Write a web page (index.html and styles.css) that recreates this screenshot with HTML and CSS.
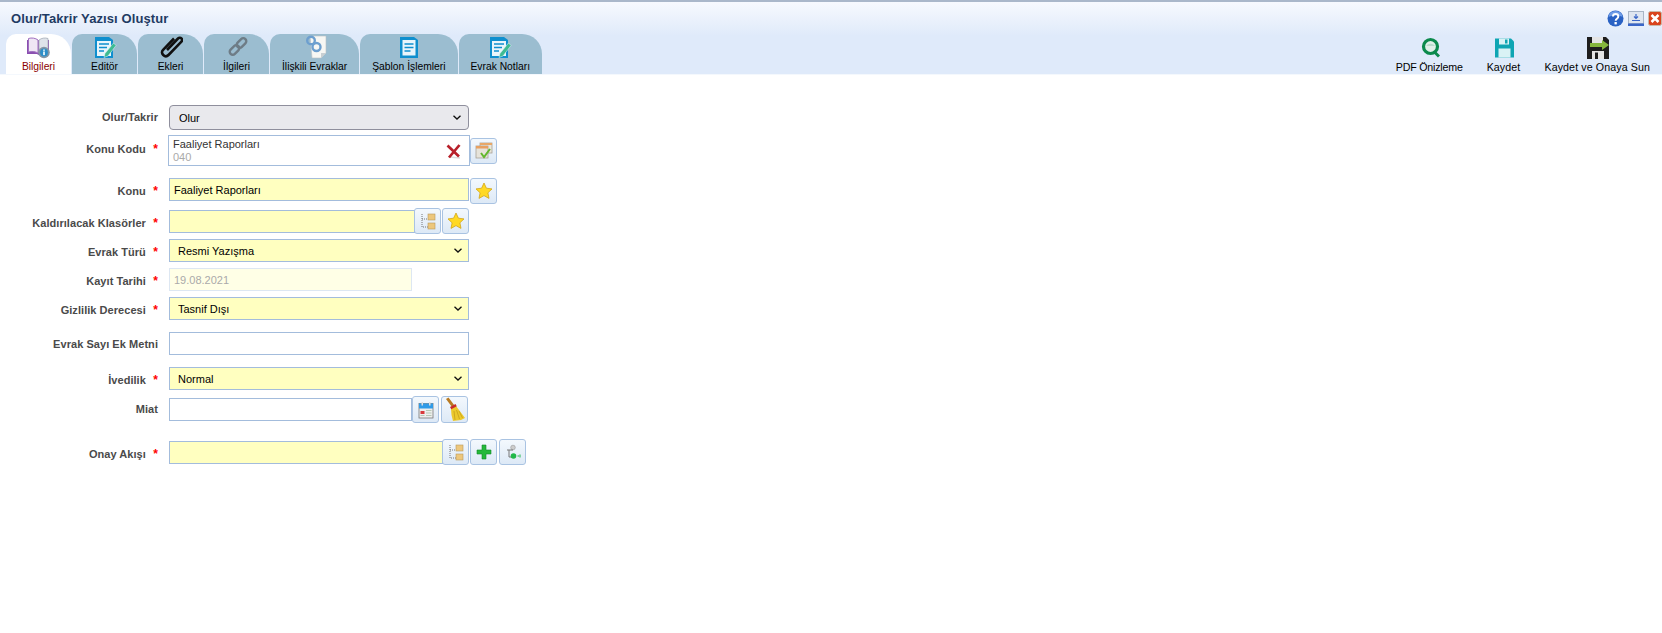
FILE: index.html
```html
<!DOCTYPE html>
<html lang="tr">
<head>
    <meta charset="UTF-8">
    <title>Olur/Takrir Yazısı Oluştur</title>
    <link rel="stylesheet" href="styles.css">
</head>
<body>
    <div class="header">
        <div class="title-bar">
            <span class="title">Olur/Takrir Yazısı Oluştur</span>
            <div class="window-icons">
                <svg width="17" height="17" viewBox="0 0 17 17"><circle cx="8.5" cy="8.5" r="8" fill="#2a62c4"/><path d="M1.5 7a7 6 0 0 1 14 0c-3-2-10-2-14 0z" fill="#6f9de8"/><path d="M6 6.5c0-3.2 5.3-3.2 5.3 0 0 2.3-2.6 2.2-2.6 4.2" fill="none" stroke="#fff" stroke-width="2"/><rect x="7.5" y="12" width="2.3" height="2.4" fill="#fff"/></svg>
                <svg width="16" height="15" viewBox="0 0 16 15"><rect x="0.5" y="0.5" width="15" height="12" fill="#dfe6f0" stroke="#a8b5c6"/><rect y="12.5" width="16" height="2.5" fill="#3a66c8"/><path d="M8 3v4M6 5.5L8 7.5 10 5.5" fill="none" stroke="#3a66c8" stroke-width="1.2"/><rect x="4" y="9" width="8" height="1" fill="#3a66c8"/></svg>
                <svg width="14" height="15" viewBox="0 0 14 15"><rect x="0.5" y="0.5" width="13" height="14" rx="2" fill="#d9431c" stroke="#c9b8a8"/><path d="M3.5 4l7 7M10.5 4l-7 7" stroke="#fff" stroke-width="2.6"/></svg>
            </div>
        </div>
        <div class="tab-bar">
            <div class="tabs">
                <div class="tab active">
                    <svg width="25" height="24" viewBox="0 0 25 24"><path d="M1 5v14h10l1.5 1 1.5-1h9V5z" fill="#8a4fb0"/><path d="M2.500 3.500c3-1 7-.5 9.500 1.500v13c-2.500-1.500-6-2-9.500-1z" fill="#efe6f4" stroke="#a06fc0"/><path d="M13 5c2.500-2 6-2.500 9-1.500V15l-9 3z" fill="#dfe3ea" stroke="#a7adb8" stroke-width=".8"/><circle cx="18" cy="17.500" r="5.800" fill="#8696a5"/><circle cx="18" cy="17.500" r="3.900" fill="#2d8ec8"/><rect x="17.200" y="16.500" width="1.600" height="3.600" fill="#fff"/><rect x="17.200" y="14.500" width="1.600" height="1.300" fill="#fff"/></svg>
                    <span>Bilgileri</span>
                </div>
                <div class="tab">
                    <svg width="24" height="24" viewBox="-2 0 24 24"><path d="M0 2h14l4 3v18H0z" fill="#0f8fce"/><path d="M2 6h14v15H2z" fill="#e9f5fb"/><path d="M4 9h10M4 12.500h8M4 16h5" stroke="#0f8fce" stroke-width="1.700"/><path d="M18.500 8l2.500 2.500-8 10.500-4 1.500 1-4z" fill="#3dbb92" stroke="#e9f5fb" stroke-width=".5"/></svg>
                    <span>Editör</span>
                </div>
                <div class="tab">
                    <svg width="24" height="24" viewBox="-2 0 24 24"><path d="M6 15L17 3.500c2.400-2.400 5.600 1 3.200 3.400L7.500 20c-3.400 3.400-8.800-1.600-5.400-5.200L13 3.500" fill="none" stroke="#111" stroke-width="2.600"/></svg>
                    <span>Ekleri</span>
                </div>
                <div class="tab">
                    <svg width="24" height="22" viewBox="-3 0 24 22"><g fill="none" stroke="#6e7c86" stroke-width="2.400"><rect x="1" y="11" width="11" height="6" rx="3" transform="rotate(-45 6.500 14)"/><rect x="8" y="4" width="11" height="6" rx="3" transform="rotate(-45 13.500 7)"/></g></svg>
                    <span>İlgileri</span>
                </div>
                <div class="tab">
                    <svg width="24" height="24" viewBox="-3 0 24 24"><path d="M4 1h16v17l-5 5H6z" fill="#f7f7f4" stroke="#b9c0c4" stroke-width=".6"/><circle cx="5" cy="5.500" r="3.800" fill="none" stroke="#6d9fcf" stroke-width="2.400"/><circle cx="10.500" cy="12" r="4" fill="none" stroke="#6d9fcf" stroke-width="2.400"/><path d="M15 23v-5h5z" fill="#c9cfd2"/></svg>
                    <span>İlişkili Evraklar</span>
                </div>
                <div class="tab">
                    <svg width="20" height="24" viewBox="-1 0 20 24"><path d="M0 2h14l4 3v18H0z" fill="#0f8fce"/><path d="M2.500 5h13v15.500h-13z" fill="#e9f5fb"/><path d="M4.500 9h9M4.500 12.500h9M4.500 16h6" stroke="#0f8fce" stroke-width="1.700"/></svg>
                    <span>Şablon İşlemleri</span>
                </div>
                <div class="tab">
                    <svg width="24" height="24" viewBox="-2 0 24 24"><path d="M0 2h14l4 3v18H0z" fill="#0f8fce"/><path d="M2 6h14v15H2z" fill="#e9f5fb"/><path d="M4 9h10M4 12.500h8M4 16h5" stroke="#0f8fce" stroke-width="1.700"/><path d="M18.500 8l2.500 2.500-8 10.500-4 1.500 1-4z" fill="#3dbb92" stroke="#e9f5fb" stroke-width=".5"/></svg>
                    <span>Evrak Notları</span>
                </div>
            </div>
            <div class="actions">
                <div class="action action-pdf">
                    <svg width="21" height="21" viewBox="-3 0 21 21"><circle cx="8.500" cy="9" r="7" fill="#dff0e8" stroke="#0b8a4c" stroke-width="3.200"/><path d="M12.500 14.500l4.500 4.500" stroke="#0b8a4c" stroke-width="3"/><path d="M4 8.500a5 4 0 0 1 9 0z" fill="#b8dccb"/></svg>
                    <span>PDF Önizleme</span>
                </div>
                <div class="action action-save">
                    <svg width="21" height="21" viewBox="-2 0 21 21"><path d="M0 1h16l3 3v16H0z" fill="#0ea5b3"/><rect x="4" y="1" width="10" height="6" fill="#d9f2f5"/><rect x="10" y="2" width="2.500" height="4" fill="#0ea5b3"/><rect x="3.500" y="11" width="12" height="9" fill="#d9f2f5"/></svg>
                    <span>Kaydet</span>
                </div>
                <div class="action action-send">
                    <svg width="24" height="22" viewBox="-2 0 24 22"><path d="M0 0h19l3 3v19H0z" fill="#1e1e1e"/><rect x="5" y="0" width="11" height="6" fill="#e5e5e5"/><rect x="5" y="14" width="12" height="8" fill="#e5e5e5"/><rect x="8" y="15.500" width="3" height="6.500" fill="#1e1e1e"/><path d="M3 6h12V3l7 5-7 5v-3H3z" fill="#86b73c"/></svg>
                    <span>Kaydet ve Onaya Sun</span>
                </div>
            </div>
        </div>
    </div>

    <div class="form">
        <div class="row">
            <label class="label label-up">Olur/Takrir</label>
            <select class="select-default"><option>Olur</option></select>
        </div>
        <div class="row mt-5">
            <label class="label req label-lookup">Konu Kodu <b>*</b></label>
            <div class="lookup">
                <div class="lookup-text">
                    <div>Faaliyet Raporları</div>
                    <div class="lookup-code">040</div>
                </div>
                <svg width="15" height="15" viewBox="0 0 15 15"><path d="M3 13l11 1" stroke="#ddd" stroke-width="1.500"/><path d="M1.500 1.500L13 12.500M13.500 1L3 13.500" fill="none" stroke="#b8202a" stroke-width="2.700"/></svg>
            </div>
            <button class="icon-btn"><svg width="18" height="18" viewBox="0 0 18 18"><rect x="5" y="1" width="12" height="10" fill="#ece6da" stroke="#a8a296" stroke-width=".8"/><rect x="5" y="1" width="12" height="2" fill="#e8a868"/><rect x="1" y="4" width="12" height="12" fill="#e6e3da" stroke="#a8a296" stroke-width=".8"/><rect x="1" y="4" width="12" height="2.500" fill="#e8a060"/><path d="M6 11l3 4 6-8" fill="none" stroke="#62b82e" stroke-width="2"/></svg></button>
        </div>
        <div class="row row-top mt-12">
            <label class="label req label-low">Konu <b>*</b></label>
            <input class="field required" type="text" value="Faaliyet Raporları">
            <button class="icon-btn"><svg width="18" height="18" viewBox="0 0 18 18"><path d="M9 1l2.400 5.200 5.600.7-4.100 3.900 1.100 5.600L9 13.600l-5 2.800 1.100-5.600L1 6.900l5.600-.7z" fill="#ffd924" stroke="#d2a516" stroke-width=".8"/></svg></button>
        </div>
        <div class="row row-inset mt-4">
            <label class="label req">Kaldırılacak Klasörler <b>*</b></label>
            <input class="field required w-short" type="text">
            <button class="icon-btn"><svg width="18" height="18" viewBox="0 0 18 18"><path d="M3 2v13h7M3 7h7" fill="none" stroke="#777" stroke-dasharray="1 1"/><rect x="9" y="2" width="7" height="6" fill="#edc77c" stroke="#b89a5c" stroke-width=".6"/><rect x="9" y="11" width="7" height="6" fill="#edc77c" stroke="#b89a5c" stroke-width=".6"/></svg></button>
            <button class="icon-btn"><svg width="18" height="18" viewBox="0 0 18 18"><path d="M9 1l2.400 5.200 5.600.7-4.100 3.900 1.100 5.600L9 13.600l-5 2.800 1.100-5.600L1 6.900l5.600-.7z" fill="#ffd924" stroke="#d2a516" stroke-width=".8"/></svg></button>
        </div>
        <div class="row mt-5">
            <label class="label req">Evrak Türü <b>*</b></label>
            <select class="field required"><option>Resmi Yazışma</option></select>
        </div>
        <div class="row mt-6">
            <label class="label req">Kayıt Tarihi <b>*</b></label>
            <input class="field disabled w-date" type="text" value="19.08.2021" disabled>
        </div>
        <div class="row mt-6">
            <label class="label req">Gizlilik Derecesi <b>*</b></label>
            <select class="field required"><option>Tasnif Dışı</option></select>
        </div>
        <div class="row mt-12">
            <label class="label">Evrak Sayı Ek Metni</label>
            <input class="field" type="text">
        </div>
        <div class="row mt-12">
            <label class="label req">İvedilik <b>*</b></label>
            <select class="field required"><option>Normal</option></select>
        </div>
        <div class="row mt-6">
            <label class="label label-up">Miat</label>
            <input class="field w-date" type="text">
            <button class="icon-btn btn-tall btn-flush"><svg width="16" height="18" viewBox="0 0 16 18"><rect x="1" y="2.500" width="14" height="14.500" fill="#eee" stroke="#777" stroke-width=".8"/><rect x="1" y="2.500" width="14" height="5" fill="#2f9be8"/><rect x="3.500" y="1" width="1.500" height="3.500" fill="#ddd"/><rect x="11" y="1" width="1.500" height="3.500" fill="#ddd"/><rect x="2.500" y="10" width="4" height="3" fill="#d83a3a"/><path d="M8 9.500h5.500M8 12h5.500M8 14.500h5.500M2.500 14.500h4" stroke="#b5c9b5"/></svg></button>
            <button class="icon-btn btn-tall btn-far"><svg width="22" height="25" viewBox="0 0 22 25"><path d="M2 2l2.500-1.500 6 8-2.500 1.500z" fill="#b87a22"/><path d="M7 12l5-3 9 12-4 2-8 1-1.500-6z" fill="#ecc92c"/><path d="M10 14l1 9M12.500 13l3 9M15 14l3.500 7" stroke="#c09a18" stroke-width=".7"/><path d="M6 10l5.500-3 1.300 2.200-5.500 3z" fill="#c82c28"/></svg></button>
        </div>
        <div class="row row-inset mt-16">
            <label class="label req">Onay Akışı <b>*</b></label>
            <input class="field required w-flow" type="text">
            <button class="icon-btn btn-over"><svg width="18" height="18" viewBox="0 0 18 18"><path d="M3 2v13h7M3 7h7" fill="none" stroke="#777" stroke-dasharray="1 1"/><rect x="9" y="2" width="7" height="6" fill="#edc77c" stroke="#b89a5c" stroke-width=".6"/><rect x="9" y="11" width="7" height="6" fill="#edc77c" stroke="#b89a5c" stroke-width=".6"/></svg></button>
            <button class="icon-btn"><svg width="16" height="16" viewBox="0 0 16 16"><path d="M6 1h4v5h5v4h-5v5H6v-5H1V6h5z" fill="#24b83a" stroke="#138a28" stroke-width=".6"/></svg></button>
            <button class="icon-btn btn-far"><svg width="16" height="16" viewBox="0 0 16 16"><circle cx="8" cy="3.500" r="2.300" fill="#ccc" stroke="#999" stroke-width=".6"/><path d="M2 6h6M4 6v7h3" fill="none" stroke="#777"/><circle cx="8.500" cy="12" r="2.800" fill="#20b84a"/><path d="M12.500 12h1.500M15 10.500v3" stroke="#20b84a"/></svg></button>
        </div>
    </div>
</body>
</html>
```

FILE: styles.css
```css
:root { --arrow: url("data:image/svg+xml,%3Csvg xmlns='http://www.w3.org/2000/svg' width='8' height='5' viewBox='0 0 8 5'%3E%3Cpath d='M.5 .7L4 4 7.500 .7' fill='none' stroke='%23111' stroke-width='1.300'/%3E%3C/svg%3E"); }
body { margin: 0; background: #fff; font-family: "Liberation Sans", Arial, sans-serif; font-size: 11px; color: #000; }

/* header */
.header { height: 73px; border-top: 2px solid #aab7ca; background: linear-gradient(#f7f9fe 0, #dfeafa 34px, #dfeafa 72px, #f4f8fd 72px); }
.title-bar { height: 32px; display: flex; justify-content: space-between; align-items: flex-start; }
.title { margin: 9px 0 0 11px; font-size: 13px; font-weight: bold; color: #1f3b63; letter-spacing: 0.1px; }
.window-icons { display: flex; align-items: center; gap: 4px; margin-top: 8px; }
.window-icons svg { display: block; }

.tab-bar { height: 40px; display: flex; justify-content: space-between; }
.tabs { display: flex; gap: 1px; margin-left: 6px; }
.tab { min-width: 41px; padding: 0 12px; height: 40px; background: #9bbdd0; border-radius: 10px 20px 0 0; display: flex; flex-direction: column; align-items: center; font-size: 10.3px; }
.tab svg { display: block; height: 24px; margin-top: 1px; }
.tab span { margin-top: 2px; white-space: nowrap; }
.tab.active { background: #fff; color: #8b0000; }

.actions { display: flex; font-size: 8pt; }
.action { display: flex; flex-direction: column; align-items: center; white-space: nowrap; }
.action svg { display: block; height: 22px; margin-top: 3px; }
.action span { margin-top: 2px; }
.action-pdf { margin-right: 24px; letter-spacing: -0.2px; }
.action-save { margin-right: 24px; letter-spacing: 0.1px; }
.action-send { margin-right: 12px; letter-spacing: 0.1px; }

/* form */
.form { padding-top: 30px; display: flex; flex-direction: column; }
.row { display: flex; align-items: center; }
.row-top { align-items: flex-start; }
.row-inset { align-items: flex-start; }
.row-inset .field { margin-top: 2px; }
.mt-4 { margin-top: 4px; }
.mt-5 { margin-top: 5px; }
.mt-6 { margin-top: 6px; }
.mt-12 { margin-top: 12px; }
.mt-16 { margin-top: 16px; }

.label { width: 158px; margin-right: 11px; flex: none; text-align: right; font-size: 11px; font-weight: bold; color: #4a4a4a; letter-spacing: 0.05px; white-space: nowrap; }
.label b { display: inline-block; width: 9px; text-align: right; color: #f00; font-size: 12px; }
.req { padding-top: 2px; }
.label-up { padding-bottom: 2px; }
.label-lookup { padding-top: 0; padding-bottom: 3px; }
.label-low { padding-top: 6px; }
.row-inset .label { padding-top: 8px; }

.field { width: 300px; height: 23px; box-sizing: border-box; margin: 0; padding: 0 4px; border: 1px solid #a3bcdc; border-radius: 0; background: #fff; font-family: inherit; font-size: 11px; color: #000; }
select.field { appearance: none; padding: 0 0 0 8px; background: #ffffc0 var(--arrow) no-repeat right 6px center; }
.required { background: #ffffc0; }
.disabled { background: #ffffe6; border-color: #dde7f2; color: #aaa; }
.w-short { width: 246px; margin-right: -2px; }
.w-date { width: 243px; }
.w-flow { width: 274px; }
.select-default { appearance: none; width: 300px; height: 25px; margin: 0; padding: 0 0 0 9px; border: 1px solid #8f8f9d; border-radius: 4px; background: #e9e9ed var(--arrow) no-repeat right 7px center; font-family: inherit; font-size: 11px; color: #000; }

.lookup { width: 302px; height: 31px; box-sizing: border-box; margin-left: -1px; border: 1px solid #a3bcdc; padding: 2px 8px 0 4px; display: flex; justify-content: space-between; align-items: center; color: #333; }
.lookup-text { line-height: 13px; margin-top: -1px; }
.lookup-code { color: #aaa; }

.icon-btn { width: 27px; height: 26px; box-sizing: border-box; margin: 0 0 0 1px; padding: 0; border: 1px solid #a9c3e2; border-radius: 3px; background: linear-gradient(#f3f8fd, #dde9f6); display: flex; align-items: center; justify-content: center; flex: none; }
.lookup + .icon-btn { margin-left: 0; }
.btn-tall { height: 27px; }
.btn-far { margin-left: 2px; }
.btn-flush { margin-left: 0; }
.btn-over { margin-left: -1px; }
.icon-btn svg { display: block; }
```
